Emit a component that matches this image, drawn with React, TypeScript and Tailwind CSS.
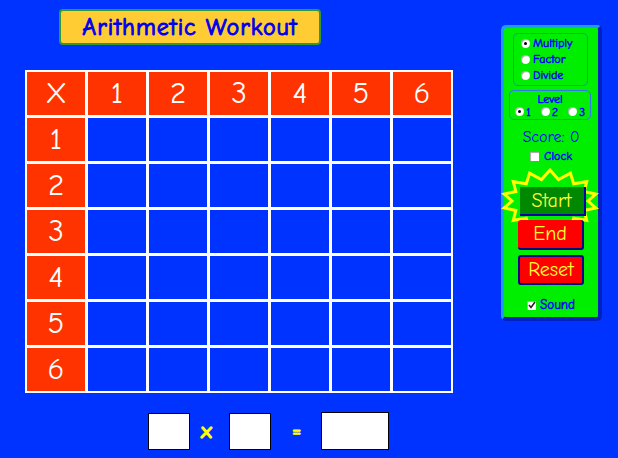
import React from "react";

const comic = "font-['Comic_Sans_MS','Comic_Neue','DejaVu_Sans',sans-serif]";
const bold = "[-webkit-text-stroke:0.5px_currentColor]";

function starPoints(cx: number, cy: number, n: number, rxo: number, ryo: number, rxi: number, ryi: number) {
  const pts: string[] = [];
  for (let i = 0; i < n * 2; i++) {
    const a = (Math.PI * i) / n - Math.PI / 2;
    const outer = i % 2 === 0;
    const x = cx + Math.cos(a) * (outer ? rxo : rxi);
    const y = cy + Math.sin(a) * (outer ? ryo : ryi);
    pts.push(`${x.toFixed(1)},${y.toFixed(1)}`);
  }
  return pts.join(" ");
}

function Radio({ on }: { on?: boolean }) {
  return (
    <span className="inline-flex h-[9px] w-[9px] shrink-0 items-center justify-center rounded-full bg-white shadow-[inset_1px_1px_1px_rgba(0,0,0,0.35)]">
      {on && <span className="h-[3px] w-[3px] rounded-full bg-black" />}
    </span>
  );
}

function Check({ on }: { on?: boolean }) {
  return (
    <span className="inline-flex h-[9px] w-[9px] shrink-0 items-center justify-center bg-white shadow-[inset_1px_1px_1px_rgba(0,0,0,0.35)]">
      {on && (
        <svg width="8" height="8" viewBox="0 0 8 8">
          <path d="M1 4 L3 6.5 L7 1" fill="none" stroke="#222" strokeWidth="1.5" />
        </svg>
      )}
    </span>
  );
}

export default function App() {
  const nums = [1, 2, 3, 4, 5, 6];
  return (
    <div className={`flex h-[458px] w-[618px] bg-[#0033ff] ${comic}`}>
      {/* left side */}
      <div className="flex w-[476px] flex-col pl-[25px]">
        <div className="mt-[9px] ml-[34px] flex h-[36px] w-[262px] items-center justify-center rounded-[4px] border-2 border-[#339933] bg-[#ffcc33] text-[24px] tracking-[1px] text-[#0000ee] [-webkit-text-stroke:1px_#0000ee]">
          Arithmetic Workout
        </div>

        <div className="mt-[25px] grid w-max grid-cols-[repeat(7,58px)] grid-rows-[repeat(7,43px)] gap-[3px] border-2 border-white bg-white">
          <div className="flex items-center justify-center bg-[#ff3300] text-[31px] text-white">X</div>
          {nums.map((n) => (
            <div key={"h" + n} className="flex items-center justify-center bg-[#ff3300] text-[31px] text-white">
              {n}
            </div>
          ))}
          {nums.map((r) => (
            <React.Fragment key={"r" + r}>
              <div className="flex items-center justify-center bg-[#ff3300] text-[31px] text-white">{r}</div>
              {nums.map((c) => (
                <div key={r + "-" + c} className="bg-[#0033ff]" />
              ))}
            </React.Fragment>
          ))}
        </div>

        <div className="mt-[19px] flex items-center">
          <div className="ml-[123px] h-[37px] w-[42px] border border-black bg-white" />
          <span className="ml-[10px] w-[13px] text-center text-[22px] leading-none text-[#ffff00] [-webkit-text-stroke:1.5px_#ffff00]">x</span>
          <div className="ml-[16px] h-[37px] w-[42px] border border-black bg-white" />
          <span className="ml-[21px] w-[9px] text-center text-[20px] leading-none text-[#ffff00] [-webkit-text-stroke:1px_#ffff00]">=</span>
          <div className="ml-[20px] h-[38px] w-[68px] border border-black bg-white" />
        </div>
      </div>

      {/* right panel */}
      <div className="mt-[25px] ml-[25px] h-[296px] w-[101px] rounded-[5px] border-t-[3px] border-r-[4px] border-b-[4px] border-l-[3px] border-t-[#2299ff] border-r-[#0022bb] border-b-[#0022bb] border-l-[#2299ff] bg-[#00ee00]">
        <div className="flex flex-col text-[#0000ff]">
          <div className={`mt-[5px] ml-[9px] flex h-[53px] w-[75px] flex-col justify-center gap-[3px] rounded-[5px] border-[1.5px] border-[#3377ee] pl-[7px] text-[12px] leading-[13px] ${bold}`}>
            <div className="flex items-center gap-[3px]">
              <Radio on />
              <span>Multiply</span>
            </div>
            <div className="flex items-center gap-[3px]">
              <Radio />
              <span>Factor</span>
            </div>
            <div className="flex items-center gap-[3px]">
              <Radio />
              <span>Divide</span>
            </div>
          </div>

          <div className={`mt-[4px] ml-[5px] flex h-[30px] w-[82px] flex-col items-center justify-center gap-[1px] rounded-[5px] border-[1.5px] border-[#3377ee] text-[12px] leading-[12px] ${bold}`}>
            <span>Level</span>
            <div className="flex items-center gap-[2px]">
              <Radio on />
              <span className="mr-[8px]">1</span>
              <Radio />
              <span className="mr-[8px]">2</span>
              <Radio />
              <span>3</span>
            </div>
          </div>

          <div className="mt-[8px] text-center text-[16px] leading-[18px]">Score: 0</div>

          <div className={`mt-[4px] flex items-center justify-center gap-[5px] text-[12px] leading-[13px] ${bold}`}>
            <Check />
            <span>Clock</span>
          </div>

          <div className="relative mt-[24px] flex justify-center">
            <svg
              className="absolute top-[-19px] left-[-3px]"
              width="98"
              height="66"
              viewBox="0 0 98 66"
            >
              <polygon
                points={starPoints(49, 33, 14, 47, 31, 38, 22)}
                fill="#00ee00"
                stroke="#ffff00"
                strokeWidth="3"
                strokeLinejoin="miter"
              />
            </svg>
            <div className="relative ml-[3px] flex h-[29px] w-[66px] items-center justify-center border-r-2 border-b-2 border-[#0000aa] bg-[#008800] text-[20px] text-[#ffff33]">
              Start
            </div>
          </div>

          <div className="relative mt-[4px] ml-[14px] flex h-[30px] w-[66px] items-center justify-center rounded-[3px] border-r-2 border-b-2 border-[#000088] bg-[#ff0000] text-[20px] text-[#ffff33]">
            End
          </div>
          <div className="mt-[5px] ml-[14px] flex h-[30px] w-[66px] items-center justify-center rounded-[3px] border-2 border-[#000088] bg-[#ff0000] text-[20px] text-[#ffff33]">
            Reset
          </div>

          <div className={`mt-[13px] flex items-center justify-center gap-[4px] text-[13px] leading-[14px] ${bold}`}>
            <Check on />
            <span>Sound</span>
          </div>
        </div>
      </div>
    </div>
  );
}
